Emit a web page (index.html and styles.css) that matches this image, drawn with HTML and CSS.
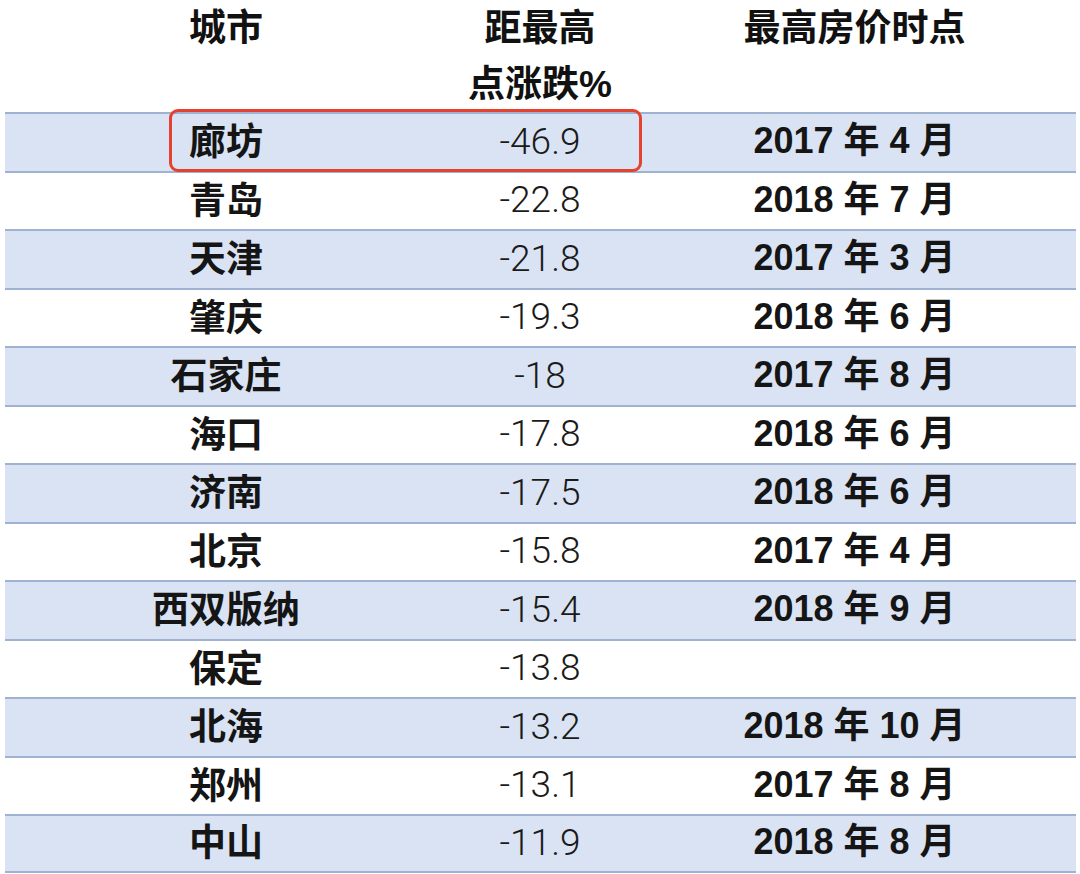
FILE: index.html
```html
<!DOCTYPE html>
<html lang="zh-CN">
<head>
<meta charset="utf-8">
<title>城市房价</title>
<link rel="stylesheet" href="styles.css">
</head>
<body>
<div class="table">
  <div class="head">
    <div class="hc">城市</div>
    <div class="hc">距最高<br>点涨跌%</div>
    <div class="hc">最高房价时点</div>
  </div>
  <div class="body">
    <div class="row blue"><div class="city">廊坊</div><div class="num">-46.9</div><div class="date">2017 年 4 月</div></div>
    <div class="row"><div class="city">青岛</div><div class="num">-22.8</div><div class="date">2018 年 7 月</div></div>
    <div class="row blue"><div class="city">天津</div><div class="num">-21.8</div><div class="date">2017 年 3 月</div></div>
    <div class="row"><div class="city">肇庆</div><div class="num">-19.3</div><div class="date">2018 年 6 月</div></div>
    <div class="row blue"><div class="city">石家庄</div><div class="num">-18</div><div class="date">2017 年 8 月</div></div>
    <div class="row"><div class="city">海口</div><div class="num">-17.8</div><div class="date">2018 年 6 月</div></div>
    <div class="row blue"><div class="city">济南</div><div class="num">-17.5</div><div class="date">2018 年 6 月</div></div>
    <div class="row"><div class="city">北京</div><div class="num">-15.8</div><div class="date">2017 年 4 月</div></div>
    <div class="row blue"><div class="city">西双版纳</div><div class="num">-15.4</div><div class="date">2018 年 9 月</div></div>
    <div class="row"><div class="city">保定</div><div class="num">-13.8</div><div class="date"></div></div>
    <div class="row blue"><div class="city">北海</div><div class="num">-13.2</div><div class="date">2018 年 10 月</div></div>
    <div class="row"><div class="city">郑州</div><div class="num">-13.1</div><div class="date">2017 年 8 月</div></div>
    <div class="row blue last"><div class="city">中山</div><div class="num">-11.9</div><div class="date">2018 年 8 月</div></div>
    <div class="highlight"></div>
  </div>
</div>
</body>
</html>
```

FILE: styles.css
```css
html, body {
  margin: 0;
  padding: 0;
  background: #ffffff;
}
body {
  width: 1080px;
  height: 874px;
  overflow: hidden;
  color: #111111;
  font-family: "Liberation Sans", "Noto Sans CJK SC", sans-serif;
}
.table {
  margin-left: 5px;
  width: 1071px;
}
.head,
.row {
  display: grid;
  grid-template-columns: 442px 186px 443px;
}
.head {
  height: 112px;
}
.hc {
  text-align: center;
  font-weight: 700;
  font-size: 37px;
  line-height: 56px;
  padding-top: 1px;
  font-family: "Liberation Sans", "Noto Sans CJK SC", sans-serif;
}
.body {
  position: relative;
}
.row {
  box-sizing: border-box;
  height: 58.5px;
  border-top: 2px solid #9fb2d2;
  align-items: center;
}
.row.last {
  border-bottom: 2px solid #9fb2d2;
}
.row.blue {
  background: #d9e3f3;
}
.city {
  text-align: center;
  font-weight: 700;
  font-size: 37px;
  font-family: "Noto Sans CJK SC", sans-serif;
  line-height: 1;
  padding-bottom: 5px;
  color: #151515;
}
.num {
  text-align: center;
  font-family: Roboto, "Liberation Sans", sans-serif;
  font-weight: 300;
  font-size: 37px;
  line-height: 1;
  padding-bottom: 2px;
  color: #1a1a1a;
}
.date {
  text-align: center;
  font-weight: 700;
  font-size: 36px;
  line-height: 1;
  padding-bottom: 2px;
  font-family: "Liberation Sans", "Noto Sans CJK SC", sans-serif;
  color: #151515;
}
.highlight {
  position: absolute;
  left: 164px;
  top: -3px;
  width: 473px;
  height: 63px;
  box-sizing: border-box;
  border: 3px solid #e5412f;
  border-radius: 9px;
}
```
